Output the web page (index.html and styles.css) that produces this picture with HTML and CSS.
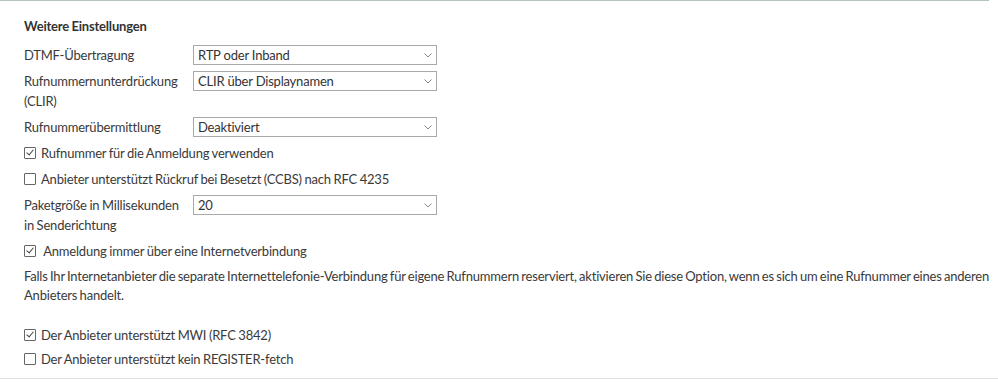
FILE: index.html
```
<!DOCTYPE html>
<html lang="de">
  <head>
    <meta charset="UTF-8" />
    <title>Weitere Einstellungen</title>
    <link rel="stylesheet" href="styles.css">
  </head>
  <body>
    <div class="section">
      <h3>Weitere Einstellungen</h3>

      <div class="row">
        <label class="lbl" for="dtmf">DTMF-Übertragung</label>
        <div class="sel">
          <select id="dtmf"><option>RTP oder Inband</option></select>
          <svg viewBox="0 0 8 5" width="8" height="5"><path d="M0.5 0.5 L4 4 L7.5 0.5" fill="none" stroke="#888" stroke-width="1" /></svg>
        </div>
      </div>
      <div class="row">
        <label class="lbl" for="clir">Rufnummernunterdrückung (CLIR)</label>
        <div class="sel">
          <select id="clir"><option>CLIR über Displaynamen</option></select>
          <svg viewBox="0 0 8 5" width="8" height="5"><path d="M0.5 0.5 L4 4 L7.5 0.5" fill="none" stroke="#888" stroke-width="1" /></svg>
        </div>
      </div>
      <div class="row">
        <label class="lbl" for="clip">Rufnummerübermittlung</label>
        <div class="sel">
          <select id="clip"><option>Deaktiviert</option></select>
          <svg viewBox="0 0 8 5" width="8" height="5"><path d="M0.5 0.5 L4 4 L7.5 0.5" fill="none" stroke="#888" stroke-width="1" /></svg>
        </div>
      </div>

      <label class="check"><input type="checkbox" checked /> Rufnummer für die Anmeldung verwenden</label>
      <label class="check"><input type="checkbox" /> Anbieter unterstützt Rückruf bei Besetzt (CCBS) nach RFC 4235</label>

      <div class="row">
        <label class="lbl" for="paket">Paketgröße in Millisekunden in Senderichtung</label>
        <div class="sel">
          <select id="paket"><option>20</option></select>
          <svg viewBox="0 0 8 5" width="8" height="5"><path d="M0.5 0.5 L4 4 L7.5 0.5" fill="none" stroke="#888" stroke-width="1" /></svg>
        </div>
      </div>

      <label class="check"><input type="checkbox" checked />&nbsp;Anmeldung immer über eine Internetverbindung</label>
      <p class="hint">Falls Ihr Internetanbieter die separate Internettelefonie-Verbindung für eigene Rufnummern reserviert, aktivieren Sie diese Option, wenn es sich um eine Rufnummer eines anderen Anbieters handelt.</p>

      <label class="check mwi"><input type="checkbox" checked /> Der Anbieter unterstützt MWI (RFC 3842)</label>
      <label class="check last"><input type="checkbox" /> Der Anbieter unterstützt kein REGISTER-fetch</label>
    </div>
    <div class="bottom"></div>
  </body>
</html>
```

FILE: styles.css
```
* {
  margin: 0;
  padding: 0;
  box-sizing: border-box;
}
body {
  font-family: Lato, "Open Sans", sans-serif;
  font-size: 13px;
  letter-spacing: -0.2px;
  word-spacing: -0.5px;
  line-height: 20px;
  color: #3a3a3a;
  background: #fff;
  width: 998px;
}
.section {
  width: 989px;
  border-top: 1px solid #b2c3c3;
  padding: 15px 0 9px 24px;
}
h3 {
  font-size: 13px;
  font-weight: bold;
  color: #333;
  margin-bottom: 9px;
}
.row {
  display: flex;
  align-items: flex-start;
  margin-bottom: 6px;
}
.lbl {
  width: 169px;
  padding-right: 8px;
}
.sel {
  position: relative;
  width: 244px;
  height: 20px;
}
.sel select {
  appearance: none;
  -webkit-appearance: none;
  width: 100%;
  height: 20px;
  border: 1px solid #a9a9a9;
  background: #fff;
  font-family: inherit;
  font-size: 13px;
  letter-spacing: -0.2px;
  color: #333;
  padding: 0 20px 0 4px;
  line-height: 18px;
  outline: none;
}
.sel svg {
  position: absolute;
  right: 5px;
  top: 8px;
  pointer-events: none;
}
.check {
  display: flex;
  align-items: center;
  height: 20px;
  margin-bottom: 6px;
}
.check.mwi {
  margin-bottom: 4px;
}
.check.last {
  margin-bottom: 0;
}
.check input {
  appearance: none;
  -webkit-appearance: none;
  width: 12px;
  height: 12px;
  border: 1px solid #666;
  border-radius: 1px;
  background: #fff;
  margin-right: 5px;
  position: relative;
  flex-shrink: 0;
}
.check input:checked::after {
  content: "";
  position: absolute;
  left: 3px;
  top: 0px;
  width: 3px;
  height: 6px;
  border-right: 1px solid #444;
  border-bottom: 1px solid #444;
  transform: rotate(40deg);
}
.hint {
  margin-right: -9px;
  margin-bottom: 20px;
  line-height: 19px;
  word-spacing: -0.8px;
}
.bottom {
  border-top: 1px solid #e2e2e2;
}
```
